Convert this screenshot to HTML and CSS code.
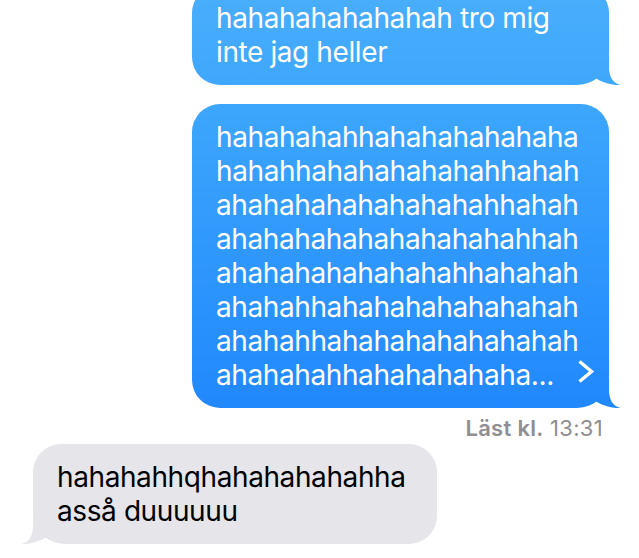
FILE: index.html
```html
<!DOCTYPE html>
<html lang="sv">
<head>
<meta charset="utf-8">
<title>Meddelanden</title>
<link rel="stylesheet" href="styles.css">
</head>
<body>
<main class="thread">
  <div class="bubble me first">
    <div class="line">hahahahahahahah tro mig</div>
    <div class="line">inte jag heller</div>
  </div>
  <div class="bubble me long">
    <div class="line">hahahahahhahahahahahaha</div>
    <div class="line">hahahhahahahahahahhahah</div>
    <div class="line">ahahahahahahahahahhahah</div>
    <div class="line">ahahahahahahahahahahhah</div>
    <div class="line">ahahahahahahahahhahahah</div>
    <div class="line">ahahahhahahahahahahahah</div>
    <div class="line">ahahahhahahahahahahahah</div>
    <div class="line last"><span>ahahahahhahahahahaha...</span><svg class="chevron" width="18" height="26" viewBox="0 0 18 26"><path d="M2.5 3.5 L14.5 13.5 L2.5 23.5" fill="none" stroke="#fff" stroke-width="3.4"/></svg></div>
  </div>
  <div class="receipt"><b>Läst kl.</b> 13:31</div>
  <div class="bubble them">
    <div class="line">hahahahhqhahahahahahha</div>
    <div class="line">asså duuuuuu</div>
  </div>
</main>
</body>
</html>
```

FILE: styles.css
```css
html {
  margin: 0;
  padding: 0;
  background: #ffffff;
}

body {
  margin: 0;
  padding: 0;
  font-family: Inter, "Noto Sans", "Liberation Sans", sans-serif;
  -webkit-font-smoothing: antialiased;
}

.thread {
  display: flex;
  flex-direction: column;
  padding: 0 30px 0 33px;
  margin-top: -15px;
}

.bubble {
  position: relative;
  box-sizing: border-box;
  font-size: 28px;
  line-height: 34px;
  letter-spacing: -0.4px;
  padding: 16px 14px 16px 24px;
  border-radius: 28px;
}

.bubble::after {
  content: "";
  position: absolute;
  bottom: 0;
  width: 42px;
  height: 30px;
  z-index: -1;
  background: inherit;
  clip-path: path("M0 0 H30 V12 C30 22 34 28.5 42 30 C36 30.5 25 28.5 17 23.5 L0 23.5 Z");
}

.me {
  align-self: flex-end;
  width: 417px;
  color: #ffffff;
  background: linear-gradient(180deg, #48adfb 0px, #3ca6fc 110px, #2188fd 410px, #1c84fd 558px) fixed;
  border-bottom-right-radius: 32px;
}

.me::after {
  right: -12px;
}

.long {
  margin-top: 19px;
}

.line {
  white-space: nowrap;
}

.last {
  display: flex;
  align-items: flex-start;
  justify-content: space-between;
}

.chevron {
  display: block;
  flex: none;
}

.receipt {
  align-self: flex-end;
  margin-top: 8px;
  padding-right: 6px;
  font-size: 22px;
  line-height: 24px;
  letter-spacing: 0.3px;
  color: #8e8e93;
}

.receipt b {
  font-weight: 600;
}

.them {
  align-self: flex-start;
  width: 404px;
  margin-top: 4px;
  color: #000000;
  background: #e5e5ea;
  border-bottom-left-radius: 32px;
}

.them::after {
  left: -12px;
  transform: scaleX(-1);
}
```
